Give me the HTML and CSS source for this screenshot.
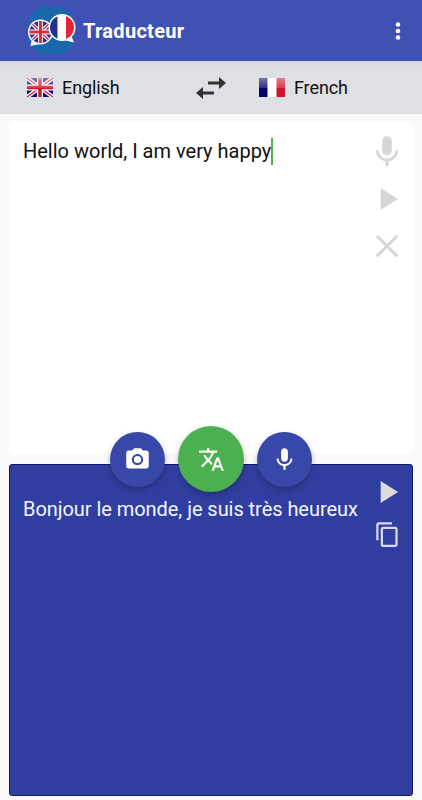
FILE: index.html
```html
<!DOCTYPE html>
<html lang="fr">
<head>
    <meta charset="UTF-8">
    <meta name="viewport" content="width=device-width, initial-scale=1.0">
    <title>Traducteur</title>
    <link rel="stylesheet" href="styles.css">
</head>
<body>

<header class="toolbar">
    <svg class="logo" viewBox="0 0 48 48">
        <defs>
            <clipPath id="ukClip"><circle cx="12.5" cy="25" r="11"/></clipPath>
            <clipPath id="frClip"><circle cx="34" cy="20.5" r="12"/></clipPath>
        </defs>
        <rect x="0.500" y="0" width="46" height="47" rx="18" fill="#1a68ac"/>
        <path d="M4 32L2.500 39L12 37Z" fill="#fff"/>
        <circle cx="12.500" cy="25" r="12.500" fill="#fff"/>
        <g clip-path="url(#ukClip)">
            <rect x="0" y="13" width="25" height="24" fill="#24348c"/>
            <path d="M1 14L24 36M24 14L1 36" stroke="#fff" stroke-width="3.500"/>
            <path d="M1 14L24 36M24 14L1 36" stroke="#dc2c40" stroke-width="1.500"/>
            <path d="M12.500 13V37M0 25H25" stroke="#fff" stroke-width="5"/>
            <path d="M12.500 13V37M0 25H25" stroke="#dc2c40" stroke-width="3.200"/>
        </g>
        <path d="M43 28L46 35.500L36 33Z" fill="#fff"/>
        <circle cx="34" cy="20.500" r="13.500" fill="#fff"/>
        <g clip-path="url(#frClip)">
            <rect x="21" y="8" width="8.500" height="25" fill="#24348c"/>
            <rect x="38" y="8" width="9" height="25" fill="#e42538"/>
        </g>
    </svg>
    <h1>Traducteur</h1>
    <svg class="more" viewBox="0 0 6 20">
        <circle cx="3" cy="3.500" r="2.300"/>
        <circle cx="3" cy="10" r="2.300"/>
        <circle cx="3" cy="16.500" r="2.300"/>
    </svg>
</header>

<div class="languages">
    <div class="lang">
        <svg class="flag" viewBox="0 0 26 19">
            <defs>
                <linearGradient id="gloss" x1="0" y1="0" x2="0" y2="1">
                    <stop offset="0" stop-color="#fff" stop-opacity=".45"/>
                    <stop offset=".5" stop-color="#fff" stop-opacity=".18"/>
                    <stop offset=".55" stop-color="#fff" stop-opacity="0"/>
                </linearGradient>
            </defs>
            <rect width="26" height="19" fill="#0c0c6c"/>
            <path d="M0 0L26 19M26 0L0 19" stroke="#fff" stroke-width="4"/>
            <path d="M0 0L26 19M26 0L0 19" stroke="#d0142c" stroke-width="1.300"/>
            <path d="M13 0V19M0 9.500H26" stroke="#fff" stroke-width="6"/>
            <path d="M13 0V19M0 9.500H26" stroke="#d0142c" stroke-width="3.500"/>
            <rect width="26" height="19" fill="url(#gloss)"/>
        </svg>
        <span>English</span>
    </div>
    <svg class="swap" viewBox="0 0 30 24">
        <path d="M12 5.500H23V1L30 7L23 13V8.500H12Z"/>
        <path d="M18 15.500H7V11L0 17L7 23V18.500H18Z"/>
    </svg>
    <div class="lang">
        <svg class="flag" viewBox="0 0 26 19">
            <rect width="26" height="19" fill="#fff"/>
            <rect width="8.500" height="19" fill="#06066a"/>
            <rect x="17.500" width="8.500" height="19" fill="#d0142c"/>
            <rect width="26" height="19" fill="url(#gloss)"/>
        </svg>
        <span>French</span>
    </div>
</div>

<main class="content">
    <section class="card source">
        <p class="text">Hello world, I am very happy<span class="caret"></span></p>
        <div class="tools">
            <svg viewBox="0 0 24 24"><path d="M12 14c1.660 0 3-1.340 3-3V5c0-1.660-1.340-3-3-3S9 3.340 9 5v6c0 1.660 1.340 3 3 3zM17.300 11c0 3-2.540 5.100-5.300 5.100S6.700 14 6.700 11H5c0 3.410 2.720 6.230 6 6.720V21h2v-3.280c3.280-.48 6-3.300 6-6.720z"/></svg>
            <svg viewBox="0 0 24 24"><path d="M8 5v14l11-7z"/></svg>
            <svg viewBox="0 0 24 24"><path d="M5.500 5.500L18.500 18.500M18.500 5.500L5.500 18.500" stroke="#d6d6d6" stroke-width="1.900"/></svg>
        </div>
    </section>

    <div class="actions">
        <button class="fab">
            <svg viewBox="0 0 24 24"><circle cx="12" cy="12" r="3.200"/><path d="M9 2L7.170 4H4c-1.100 0-2 .9-2 2v12c0 1.100.9 2 2 2h16c1.100 0 2-.9 2-2V6c0-1.100-.9-2-2-2h-3.170L15 2H9zm3 15c-2.760 0-5-2.240-5-5s2.240-5 5-5 5 2.240 5 5-2.240 5-5 5z"/></svg>
        </button>
        <button class="fab translate">
            <svg viewBox="0 0 24 24"><path d="M12.870 15.070l-2.540-2.510.03-.03c1.740-1.940 2.980-4.170 3.710-6.530H17V4h-7V2H8v2H1v1.990h11.170C11.500 7.920 10.440 9.750 9 11.350 8.070 10.320 7.300 9.190 6.690 8h-2c.73 1.630 1.730 3.170 2.980 4.560l-5.090 5.020L4 19l5-5 3.110 3.110.76-2.040zM18.500 10h-2L12 22h2l1.120-3h4.750L21 22h2l-4.500-12zm-2.620 7l1.620-4.330L19.120 17h-3.240z"/></svg>
        </button>
        <button class="fab">
            <svg viewBox="0 0 24 24"><path d="M12 14c1.660 0 3-1.340 3-3V5c0-1.660-1.340-3-3-3S9 3.340 9 5v6c0 1.660 1.340 3 3 3zM17.300 11c0 3-2.540 5.100-5.300 5.100S6.700 14 6.700 11H5c0 3.410 2.720 6.230 6 6.720V21h2v-3.280c3.280-.48 6-3.300 6-6.720z"/></svg>
        </button>
    </div>

    <section class="card result">
        <p class="text">Bonjour le monde, je suis très heureux</p>
        <div class="tools">
            <svg viewBox="0 0 24 24"><path d="M8 5v14l11-7z"/></svg>
            <svg class="copy" viewBox="0 0 24 24"><path d="M16 1H4c-1.100 0-2 .9-2 2v14h2V3h12V1zm3 4H8c-1.100 0-2 .9-2 2v14c0 1.100.9 2 2 2h11c1.100 0 2-.9 2-2V7c0-1.100-.9-2-2-2zm0 16H8V7h11v14z"/></svg>
        </div>
    </section>
</main>

</body>
</html>
```
FILE: styles.css
```css
* {
    box-sizing: border-box;
    margin: 0;
    padding: 0;
}

body {
    font-family: Roboto, 'Liberation Sans', sans-serif;
    background-color: #fafafa;
    height: 800px;
    overflow: hidden;
    display: flex;
    flex-direction: column;
}

svg {
    display: block;
    flex: none;
}

.toolbar {
    flex: none;
    height: 61px;
    padding: 0 21px 0 28px;
    display: flex;
    align-items: center;
    background-color: #3f51b5;
    color: #fff;
}

.logo {
    width: 48px;
    height: 48px;
}

.toolbar h1 {
    flex: 1;
    margin-left: 7px;
    font-size: 20px;
    font-weight: bold;
    letter-spacing: 0.3px;
}

.more {
    width: 6px;
    height: 20px;
    fill: #fff;
}

.languages {
    flex: none;
    height: 53px;
    padding: 0 27px;
    display: grid;
    grid-template-columns: 169px 63px 1fr;
    align-items: center;
    background: linear-gradient(#d3d4d8, #dfe0e4 7px);
}

.lang {
    display: flex;
    align-items: center;
    gap: 9px;
    font-size: 18px;
    letter-spacing: -0.1px;
    color: #111;
}

.flag {
    width: 26px;
    height: 19px;
}

.swap {
    width: 30px;
    height: 24px;
    fill: #333;
}

.content {
    flex: 1;
    padding: 8px 9px 4px;
    display: flex;
    flex-direction: column;
}

.card {
    flex: none;
    display: flex;
    justify-content: space-between;
    height: 332px;
    border-radius: 3px;
}

.source {
    background-color: #fff;
    padding: 11px 7px 0 14px;
}

.text {
    display: flex;
    align-items: center;
    height: 36px;
    font-size: 20px;
    color: #111;
    white-space: nowrap;
}

.caret {
    width: 2px;
    height: 27px;
    background-color: #4caf50;
}

.tools {
    display: flex;
    flex-direction: column;
    align-items: center;
    gap: 9px;
    fill: #d6d6d6;
}

.tools svg {
    width: 38px;
    height: 38px;
}

/* the buttons straddle the gap between the two cards */
.actions {
    flex: none;
    position: relative;
    z-index: 1;
    height: 66px;
    margin: -28px 0;
    display: flex;
    align-items: center;
    justify-content: center;
    gap: 13px;
}

.fab {
    display: flex;
    align-items: center;
    justify-content: center;
    width: 55px;
    height: 55px;
    border: none;
    border-radius: 50%;
    background-color: #3848a8;
    box-shadow: 0 3px 6px rgba(0, 0, 0, 0.25);
}

.fab svg {
    width: 27px;
    height: 27px;
    fill: #fff;
}

.translate {
    width: 66px;
    height: 66px;
    background-color: #4caf50;
}

.result {
    background-color: #303f9f;
    border: 1px solid #10186e;
    padding: 8px 6px 0 13px;
}

.result .text {
    height: 72px;
    letter-spacing: -0.05px;
    color: #f4f5ff;
}

.result .tools {
    gap: 10px;
    fill: #dcdcdc;
}

.result .tools .copy {
    width: 27px;
    height: 27px;
    fill: #d5daf5;
}
```
